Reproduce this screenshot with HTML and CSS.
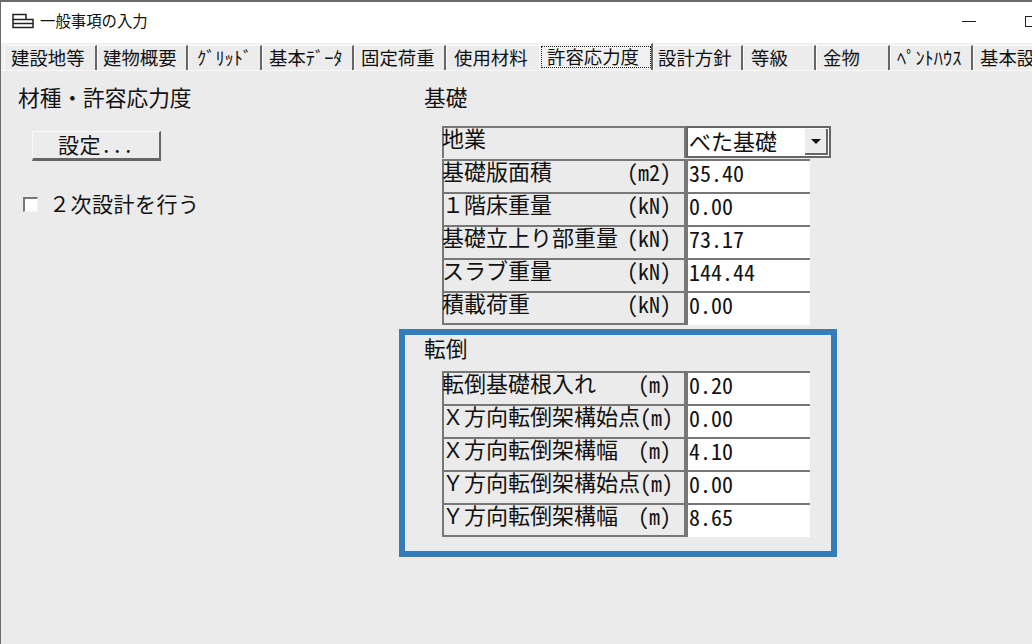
FILE: index.html
```html
<!DOCTYPE html>
<html lang="ja">
<head>
  <meta charset="UTF-8">
  <title>一般事項の入力</title>
  <link rel="stylesheet" href="styles.css">
</head>
<body>

<div class="window">
  <div class="titlebar">
    <svg class="app-icon" width="22" height="16" viewBox="0 0 22 16">
      <path d="M1 1.5H14V6.5H21V14.5H1ZM1 6.5H14M1 10.5H21" fill="none" stroke="#222" stroke-width="1.5"/>
    </svg>
    <span class="title">一般事項の入力</span>
    <span class="btn-min"></span>
    <span class="btn-max"></span>
  </div>

  <div class="tabs">
    <div class="tab">建設地等</div>
    <div class="tab">建物概要</div>
    <div class="tab">ｸﾞﾘｯﾄﾞ</div>
    <div class="tab">基本ﾃﾞｰﾀ</div>
    <div class="tab">固定荷重</div>
    <div class="tab">使用材料</div>
    <div class="tab active"><span class="focus">許容応力度</span></div>
    <div class="tab">設計方針</div>
    <div class="tab">等級</div>
    <div class="tab">金物</div>
    <div class="tab">ﾍﾟﾝﾄﾊｳｽ</div>
    <div class="tab">基本設定</div>
  </div>

  <div class="content">
    <div class="left-col">
      <h3 class="heading">材種・許容応力度</h3>
      <button class="setting-btn">設定...</button>
      <label class="check-row">
        <span class="checkbox"></span>
        <span>２次設計を行う</span>
      </label>
    </div>

    <div class="right-col">
      <h3 class="heading base-heading">基礎</h3>
      <div class="form-table">
        <div class="field-label select-label"><span>地業</span></div>
        <div class="select">
          <span>べた基礎</span>
          <span class="select-btn"><span class="arrow"></span></span>
        </div>
        <div class="field-label"><span>基礎版面積</span><span class="unit">(m2)</span></div>
        <div class="field-value">35.40</div>
        <div class="field-label"><span>１階床重量</span><span class="unit">(kN)</span></div>
        <div class="field-value">0.00</div>
        <div class="field-label"><span>基礎立上り部重量</span><span class="unit">(kN)</span></div>
        <div class="field-value">73.17</div>
        <div class="field-label"><span>スラブ重量</span><span class="unit">(kN)</span></div>
        <div class="field-value">144.44</div>
        <div class="field-label last"><span>積載荷重</span><span class="unit">(kN)</span></div>
        <div class="field-value last">0.00</div>
      </div>

      <div class="highlight">
        <h3 class="heading">転倒</h3>
        <div class="form-table">
          <div class="field-label"><span>転倒基礎根入れ</span><span class="unit">(m)</span></div>
          <div class="field-value">0.20</div>
          <div class="field-label"><span>Ｘ方向転倒架構始点</span><span class="unit">(m)</span></div>
          <div class="field-value">0.00</div>
          <div class="field-label"><span>Ｘ方向転倒架構幅</span><span class="unit">(m)</span></div>
          <div class="field-value">4.10</div>
          <div class="field-label"><span>Ｙ方向転倒架構始点</span><span class="unit">(m)</span></div>
          <div class="field-value">0.00</div>
          <div class="field-label last"><span>Ｙ方向転倒架構幅</span><span class="unit">(m)</span></div>
          <div class="field-value last">8.65</div>
        </div>
      </div>
    </div>
  </div>
</div>

</body>
</html>
```

FILE: styles.css
```css
* {
  box-sizing: border-box;
}
body {
  margin: 0;
  font-family: "Noto Sans CJK JP", "Noto Sans", sans-serif;
  color: #111;
  background: #ebebeb;
}
.window {
  width: 1032px;
  height: 644px;
  overflow: hidden;
  display: flex;
  flex-direction: column;
  border-top: 2px solid #6a6a6a;
  border-left: 1px solid #6a6a6a;
}

/* title bar */
.titlebar {
  height: 41px;
  flex: none;
  background: #fff;
  display: flex;
  align-items: center;
  padding-left: 11px;
  padding-bottom: 6px;
}
.app-icon {
  margin: 2px 6px 0 0;
}
.title {
  font-size: 15.4px;
  line-height: 20px;
}
.btn-min {
  flex: none;
  width: 14px;
  height: 1px;
  background: #222;
  margin-left: auto;
  margin-top: 4px;
}
.btn-max {
  flex: none;
  width: 11px;
  height: 11px;
  border: 1px solid #222;
  margin-left: 49px;
  margin-right: -4px;
  margin-top: 4px;
}

/* tabs */
.tabs {
  height: 27px;
  flex: none;
  display: flex;
  padding-left: 3px;
  background: #f0f0f0;
  overflow: hidden;
}
.tab {
  flex: none;
  height: 25px;
  margin-top: 2px;
  padding-left: 6px;
  font-size: 18.4px;
  line-height: 23px;
  white-space: nowrap;
  background: #ececec;
  border-top: 1px solid #fafafa;
  border-left: 1px solid #fafafa;
  border-right: 2px solid #666;
}
.tab:nth-child(1) { width: 93px; }
.tab:nth-child(2) { width: 91px; padding-left: 5px; }
.tab:nth-child(3) { width: 74px; padding-left: 8px; }
.tab:nth-child(4) { width: 92px; }
.tab:nth-child(5) { width: 92px; }
.tab:nth-child(6) { width: 93px; padding-left: 7px; border-right: none; }
.tab:nth-child(7) { width: 114px; }
.tab:nth-child(8) { width: 90px; padding-left: 4px; }
.tab:nth-child(9) { width: 73px; padding-left: 7px; }
.tab:nth-child(10) { width: 74px; }
.tab:nth-child(11) { width: 83px; }
.tab:nth-child(12) { width: 90px; border-right: none; }
.tab.active {
  height: 27px;
  margin-top: 0;
  padding-left: 1px;
  padding-top: 2px;
  background: #f0f0f0;
}
.focus {
  display: block;
  width: 110px;
  height: 22px;
  padding-left: 5px;
  line-height: 18px;
  border: 1px dotted #222;
}

/* body of the dialog */
.content {
  flex: 1;
  display: flex;
  background: #ebebeb;
  border-top: 1px solid #f8f8f8;
}
.heading {
  margin: 0;
  font-size: 21.7px;
  font-weight: 400;
  line-height: 28px;
}
.left-col {
  width: 398px;
  flex: none;
  padding: 12px 0 0 17px;
}
.setting-btn {
  display: block;
  width: 129px;
  height: 30px;
  margin: 20px 0 0 14px;
  padding: 0 0 3px;
  font-family: inherit;
  font-size: 21px;
  font-feature-settings: "hwid";
  letter-spacing: 0.5px;
  line-height: 24px;
  color: #111;
  background: #ececec;
  border: 1px solid #f8f8f8;
  border-right: 2px solid #666;
  border-bottom: 3px solid #666;
}
.check-row {
  display: flex;
  align-items: center;
  margin: 28px 0 0 5px;
  font-size: 21px;
  letter-spacing: 0.5px;
  line-height: 28px;
}
.checkbox {
  width: 15px;
  height: 15px;
  margin: 3px 11px 0 0;
  background: #fff;
  border-top: 2px solid #777;
  border-left: 2px solid #777;
  border-right: 1px solid #f4f4f4;
  border-bottom: 1px solid #f4f4f4;
}

.right-col {
  flex: 1;
}
.base-heading {
  margin: 12px 0 15px 25px;
}
.form-table {
  display: grid;
  grid-template-columns: 244px 124px;
  grid-auto-rows: 33px;
  margin-left: 43px;
  font-size: 22px;
  line-height: 24px;
}
.field-label {
  display: flex;
  justify-content: space-between;
  padding-right: 13px;
  white-space: nowrap;
  background: #ebebeb;
  border: 2px solid #777;
  border-bottom: none;
}
.field-label > span:first-child {
  margin: -3px 0 0 -2px;
}
.field-label.last {
  height: 34px;
  border-bottom: 2px solid #777;
}
.unit, .field-value {
  font-feature-settings: "hwid";
}
.unit {
  margin-top: -2px;
}
.field-value {
  padding-left: 1px;
  line-height: 22px;
  background: #fff;
  border-top: 2px solid #777;
  border-left: 2px solid #777;
}
.field-value.last {
  height: 34px;
}

/* 地業 row with the dropdown */
.select-label {
  height: 32px;
}
.select {
  width: 145px;
  height: 32px;
  display: flex;
  justify-content: space-between;
  padding: 0 1px 0 1px;
  background: #fff;
  border: 2px solid #666;
}
.select-btn {
  width: 23px;
  height: 26px;
  margin-top: 1px;
  display: flex;
  align-items: center;
  justify-content: center;
  background: #ececec;
  border-right: 2px solid #666;
  border-bottom: 2px solid #666;
}
.arrow {
  width: 0;
  height: 0;
  border: 5px solid transparent;
  border-top: 5px solid #111;
  border-bottom: none;
}

/* blue marker round the 転倒 block */
.highlight {
  width: 438px;
  height: 228px;
  margin-top: 5px;
  border: 6px solid #357cb9;
}
.highlight .heading {
  margin: -1px 0 9px 19px;
}
.highlight .form-table {
  margin-left: 37px;
}
```
